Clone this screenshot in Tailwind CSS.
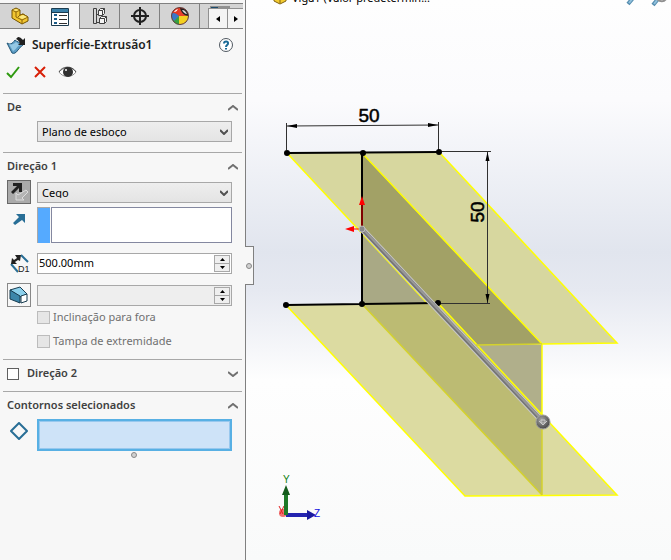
<!DOCTYPE html>
<html lang="pt-BR">
<head>
  <meta charset="UTF-8" />
  <meta name="viewport" content="width=device-width, initial-scale=1.0" />
  <title>Superfície-Extrusão1</title>
  <script src="https://cdn.jsdelivr.net/npm/@tailwindcss/browser@4"></script>
</head>
<body class="flex h-screen overflow-hidden bg-white font-['Noto_Sans',sans-serif] text-[11px] text-black">

  <!-- Property manager -->
  <aside class="relative flex w-[246px] shrink-0 flex-col border-r border-[#808080] bg-[#f7f7f7]">
    <nav class="mt-[3px] mr-[2px] flex h-[26px] border-y border-[#808080] bg-[#d4d4d4]">
      <button aria-label="Árvore" class="flex w-10 shrink-0 items-center justify-center border-r border-[#808080]">
        <svg class="h-[18px] w-[18px]" viewBox="0 0 18 18" stroke="#735300" stroke-linejoin="round">
          <path d="M1 3l4-2 4 2v5l3-1 5 3v4l-6 3L1 11z" fill="#f2c530" />
          <path d="M1 3l4 2v5l6 3 6-3-5-3-3 1-2 2M5 5l4-2M11 13v4" fill="none" stroke="#8c6408" />
          <path d="M5 2l3 1-3 1-3-1zM8 10l4-2 4 2-5 2z" fill="#fce880" stroke="none" />
        </svg>
      </button>
      <button aria-label="Propriedades" class="-mb-px flex w-10 shrink-0 items-center justify-center border-r border-[#808080] bg-[#f7f7f7]">
        <svg class="h-[18px] w-[18px]" viewBox="0 0 18 18" fill="none">
          <path d="M0.500 0.500h17v17h-17z" fill="#fff" stroke="#1c3c50" />
          <path d="M1 1h16v3H1z" fill="#3a80a8" />
          <path d="M1 4.500h16" stroke="#1c3c50" />
          <path d="M3 7h3M3 11h3M3 15h3" stroke="#1c5c88" stroke-width="2" />
          <path d="M8 7.500h8M8 11.500h8M8 15.500h8" stroke="#303030" />
        </svg>
      </button>
      <button aria-label="Configurações" class="flex w-10 shrink-0 items-center justify-center border-r border-[#808080]">
        <svg class="h-[18px] w-[18px]" viewBox="0 0 18 18" fill="#f4f4f4" stroke="#404040">
          <path d="M2.500 1.500h3v15h-3zM5.500 7.500h3M5.500 15.500h3" fill="none" />
          <path d="M7.500 3.500l2-2h4v5l-2 2h-4zM8.500 11.500l2-2h5v5l-2 2h-5z" />
          <path d="M7.500 3.500h4v5M11.500 3.500l2-2M8.500 11.500h5v5M13.500 11.500l2-2" fill="none" />
        </svg>
      </button>
      <button aria-label="Cotas" class="flex w-10 shrink-0 items-center justify-center border-r border-[#808080]">
        <svg class="h-[18px] w-[18px]" viewBox="0 0 18 18" fill="none" stroke="#202020" stroke-width="2">
          <circle cx="9" cy="9" r="6" />
          <path d="M9 0v18M0 9h18" />
        </svg>
      </button>
      <button aria-label="Aparência" class="flex w-10 shrink-0 items-center justify-center border-r border-[#808080]">
        <svg class="h-[18px] w-[18px]" viewBox="0 0 18 18">
          <circle cx="9" cy="9" r="8.500" fill="#e8402c" />
          <path d="M9 0.500C4 0.500 0.500 4 0.500 9L8 10C7 6 7 3 9 0.500z" fill="#e83820" />
          <path d="M0.500 8l7.500 1v8.500C3 17 0.500 13 0.500 8z" fill="#38a040" />
          <path d="M0.500 7C2 5 5 6 8 9l-5 5C1 12 0.500 10 0.500 7z" fill="#3878c8" />
          <path d="M8 9c4 0 7 0 9.500-1 0 6-4 9.500-9.500 9.500z" fill="#f4d020" />
          <path d="M9 1c5 0 8 3 8.500 8C14 9 10 6 9 1z" fill="#202020" />
          <path d="M11 3c3 0 4 2 5 4-2 0-4-2-5-4z" fill="#d8d8d8" />
          <path d="M3 5c1-2 2-2 4-3-1 2-2 3-4 3z" fill="#fff" />
          <circle cx="9" cy="9" r="8.500" fill="none" stroke="#604040" />
        </svg>
      </button>
      <div class="relative flex min-w-0 flex-1 justify-end">
        <svg class="absolute top-[2px] left-[10px] h-2 w-[22px]" viewBox="0 0 22 8"><path d="M0 0h20v3H0z" fill="#909090" /><path d="M1 1h7v7H1z" fill="#1c4c6c" /><path d="M8 2h6v6H8z" fill="#8cbcd8" /></svg>
        <button aria-label="Anterior" class="relative flex h-5 w-5 shrink-0 items-center justify-center self-end border border-b-0 border-[#909090] bg-[#f4f4f4]">
          <svg class="h-[6px] w-[4px]" viewBox="0 0 4 6"><path d="M4 0v6L0 3z" /></svg>
        </button>
        <button aria-label="Próximo" class="relative flex h-5 w-[15px] shrink-0 items-center justify-center self-end border-t border-[#909090] bg-[#f4f4f4]">
          <svg class="h-[6px] w-[4px]" viewBox="0 0 4 6"><path d="M0 0v6l4-3z" /></svg>
        </button>
      </div>
    </nav>

    <header class="flex h-8 items-center pr-3 pl-[6px]">
      <svg class="h-5 w-5" viewBox="0 0 20 20">
        <path d="M1 8c3 2 5 1 8-3 2 2 5 2 8 5-2 1-3 3-5 5-2 3-4 4-6 3-2-3-3-7-5-10z" fill="#5c9cc4" stroke="#245878" />
        <path d="M3 9c3 1 5 0 7-2l4 3c-3 1-4 5-7 6z" fill="#94c8e4" />
        <path d="M12 2c2 0 3 1 5 3l2-2v7h-7l2-2c-1-2-2-3-4-4z" fill="#202020" />
      </svg>
      <h1 class="ml-[6px] text-xs font-semibold text-[#202020]">Superfície-Extrusão1</h1>
      <button aria-label="Ajuda" class="ml-auto">
        <svg class="h-[14px] w-[14px]" viewBox="0 0 14 14" fill="none">
          <circle cx="7" cy="7" r="6.500" fill="#fff" stroke="#505860" />
          <path d="M5 5.500c0-3 4.500-2.500 4 0C9 7 7 7 7 9M7 10v1.500" stroke="#1c6c98" stroke-width="2" />
        </svg>
      </button>
    </header>

    <div class="flex h-[22px] items-center gap-[13px] pl-[6px]">
      <button aria-label="OK">
        <svg class="h-[14px] w-[14px]" viewBox="0 0 14 14" fill="none" stroke="#2f9a10" stroke-width="2"><path d="M1 8l4 4 8-10" /></svg>
      </button>
      <button aria-label="Cancelar">
        <svg class="h-[14px] w-[14px]" viewBox="0 0 14 14" fill="none" stroke="#d82008" stroke-width="2"><path d="M2 2l10 10M12 2L2 12" /></svg>
      </button>
      <button aria-label="Visualizar" class="-ml-[2px]">
        <svg class="h-[14px] w-[19px]" viewBox="0 0 19 14" fill="none">
          <path d="M1 7c4-5 13-6 17 0-4 6-13 6-17 0z" fill="#fff" stroke="#909090" />
          <path d="M1 7C4 1 14 0 18 7" stroke="#505050" />
          <circle cx="10" cy="7" r="5" fill="#303030" />
          <circle cx="8" cy="5" r="1" fill="#fff" />
        </svg>
      </button>
    </div>

    <section class="mx-[3px] mt-[10px] h-[59px] border-t border-[#a8a8a8] px-1">
      <div class="flex h-[27px] items-center justify-between">
        <h2 class="font-semibold text-[#404040]">De</h2>
        <button aria-label="Recolher De">
          <svg class="h-[6px] w-[10px]" viewBox="0 0 10 6" fill="none" stroke="#707070" stroke-width="2"><path d="M0 5l5-4 5 4" /></svg>
        </button>
      </div>
      <div class="relative mr-[6px] ml-[30px]">
        <select aria-label="De" class="h-[21px] w-full appearance-none border border-[#a8a8a8] bg-linear-to-b from-[#eeeeee] to-[#e4e4e4] pl-1 leading-none">
          <option>Plano de esboço</option>
        </select>
        <svg class="pointer-events-none absolute top-2 right-1 h-[6px] w-[8px]" viewBox="0 0 8 6" fill="none" stroke="#505050" stroke-width="2"><path d="M0 1l4 4 4-4" /></svg>
      </div>
    </section>

    <section class="mx-[3px] h-[207px] border-t border-[#a8a8a8] px-1">
      <div class="flex h-[27px] items-center justify-between">
        <h2 class="font-semibold text-[#404040]">Direção 1</h2>
        <button aria-label="Recolher Direção 1">
          <svg class="h-[6px] w-[10px]" viewBox="0 0 10 6" fill="none" stroke="#707070" stroke-width="2"><path d="M0 5l5-4 5 4" /></svg>
        </button>
      </div>

      <div class="mr-[6px] flex gap-[6px]">
        <button aria-label="Inverter direção" class="flex h-6 w-6 shrink-0 items-center justify-center border border-[#686868] bg-[#aaaaaa]">
          <svg class="h-5 w-5" viewBox="0 0 20 20">
            <path d="M17 8l2 2-6 6 2 2H7v-7l2 2z" fill="#b4b4b4" stroke="#dcdcdc" />
            <path d="M2 10l6-6H4V1h9v9h-3V6l-6 6z" fill="#202020" />
          </svg>
        </button>
        <div class="relative mt-[2px] flex-1">
          <select aria-label="Condição final" class="h-[21px] w-full appearance-none border border-[#a8a8a8] bg-linear-to-b from-[#eeeeee] to-[#e4e4e4] pl-1 leading-none">
            <option>Cego</option>
          </select>
          <svg class="pointer-events-none absolute top-2 right-1 h-[6px] w-[8px]" viewBox="0 0 8 6" fill="none" stroke="#505050" stroke-width="2"><path d="M0 1l4 4 4-4" /></svg>
        </div>
      </div>

      <div class="mt-[3px] mr-[6px] flex">
        <div class="w-[30px] shrink-0 pt-[6px] pl-[6px]">
          <svg class="h-3 w-3" viewBox="0 0 12 12" fill="#286e96"><path d="M0 10l6-6-3-3h9v9L9 7l-7 5z" /></svg>
        </div>
        <div class="h-9 w-[13px] shrink-0 border-t border-l border-[#a8a8a8] bg-[#55aaff]"></div>
        <textarea aria-label="Direção de extrusão" class="ml-px h-9 min-w-0 flex-1 resize-none border border-[#8488a0] bg-white"></textarea>
      </div>

      <div class="mt-[10px] mr-[6px] flex items-center">
        <svg class="mr-[7px] ml-[3px] h-5 w-5 shrink-0" viewBox="0 0 20 20" fill="none">
          <path d="M1 10l7 8M11 1l7 7" stroke="#286e96" stroke-width="2" />
          <path d="M1 10l1-6 2 2 3-2-2-3 6 0-1 6-2-1-3 2 2 2z" fill="#202020" />
          <text x="8" y="18" class="font-['Liberation_Sans',sans-serif] text-[9px]" fill="#202020">D1</text>
        </svg>
        <div class="flex h-[21px] min-w-0 flex-1 items-center border border-[#a8a8a8] bg-white pr-px">
          <input aria-label="Profundidade" value="500.00mm" class="min-w-0 flex-1 pl-px outline-none" />
          <div class="flex w-4 flex-col">
            <button aria-label="Aumentar" class="flex h-[9px] items-center justify-center border border-[#a8a8a8] bg-[#efefef]"><svg class="h-[3px] w-[5px]" viewBox="0 0 5 3"><path d="M0 3h5L2.500 0z" /></svg></button>
            <button aria-label="Diminuir" class="flex h-[8px] items-center justify-center border border-t-0 border-[#a8a8a8] bg-[#efefef]"><svg class="h-[3px] w-[5px]" viewBox="0 0 5 3"><path d="M0 0h5L2.500 3z" /></svg></button>
          </div>
        </div>
      </div>

      <div class="mt-[9px] mr-[6px] flex items-center gap-[6px]">
        <button aria-label="Inclinação" class="flex h-6 w-6 shrink-0 items-center justify-center border border-[#888888] bg-[#f7f7f7]">
          <svg class="h-5 w-5" viewBox="0 0 20 20" stroke="#183c50" stroke-linejoin="round">
            <path d="M1 5l10-3 7 7-7 3z" fill="#8cd0ec" />
            <path d="M1 5l10 6v7L1 14z" fill="#3c86aa" />
            <path d="M12 11l6-2v7l-6 2z" fill="#fff" />
          </svg>
        </button>
        <div class="flex h-[21px] min-w-0 flex-1 items-center border border-[#a8a8a8] bg-[#eeeeee] pr-px">
          <input aria-label="Ângulo" disabled class="min-w-0 flex-1" />
          <div class="flex w-4 flex-col">
            <button aria-label="Aumentar ângulo" class="flex h-[9px] items-center justify-center border border-[#a8a8a8] bg-[#efefef]"><svg class="h-[3px] w-[5px]" viewBox="0 0 5 3"><path d="M0 3h5L2.500 0z" /></svg></button>
            <button aria-label="Diminuir ângulo" class="flex h-[8px] items-center justify-center border border-t-0 border-[#a8a8a8] bg-[#efefef]"><svg class="h-[3px] w-[5px]" viewBox="0 0 5 3"><path d="M0 0h5L2.500 3z" /></svg></button>
          </div>
        </div>
      </div>

      <label class="ml-[30px] flex h-5 items-center gap-[3px] text-[#707070]">
        <input type="checkbox" disabled class="h-[13px] w-[13px] appearance-none border border-[#bcbcbc] bg-[#e6e6e6]" />
        Inclinação para fora
      </label>
      <label class="mt-1 ml-[30px] flex h-5 items-center gap-[3px] text-[#707070]">
        <input type="checkbox" disabled class="h-[13px] w-[13px] appearance-none border border-[#bcbcbc] bg-[#e6e6e6]" />
        Tampa de extremidade
      </label>
    </section>

    <section class="mx-[3px] flex h-8 justify-between border-t border-[#a8a8a8] px-1">
      <label class="flex h-[27px] items-center gap-2 font-semibold text-[#404040]">
        <input type="checkbox" class="h-3 w-3 appearance-none border border-[#606060] bg-white" />
        Direção 2
      </label>
      <button aria-label="Expandir Direção 2" class="h-[27px]">
        <svg class="h-[6px] w-[10px]" viewBox="0 0 10 6" fill="none" stroke="#707070" stroke-width="2"><path d="M0 1l5 4 5-4" /></svg>
      </button>
    </section>

    <section class="mx-[3px] border-t border-[#a8a8a8] px-1">
      <div class="flex h-[27px] items-center justify-between">
        <h2 class="font-semibold text-[#404040]">Contornos selecionados</h2>
        <button aria-label="Recolher Contornos selecionados">
          <svg class="h-[6px] w-[10px]" viewBox="0 0 10 6" fill="none" stroke="#707070" stroke-width="2"><path d="M0 5l5-4 5 4" /></svg>
        </button>
      </div>
      <div class="mr-[6px] flex">
        <svg class="mt-[3px] mr-[9px] ml-[3px] h-[18px] w-[18px] shrink-0" viewBox="0 0 18 18" fill="none" stroke="#286e96" stroke-width="2" stroke-linejoin="round"><path d="M9 1l8 8-8 8-8-8z" /></svg>
        <textarea aria-label="Contornos selecionados" class="h-8 min-w-0 flex-1 resize-none border-2 border-[#58b0e4] bg-[#cee3f8] inset-ring inset-ring-[#98c8ee]"></textarea>
      </div>
      <div class="flex justify-center pt-px pl-[22px]">
        <div class="h-[6px] w-[6px] rounded-full border border-[#888888] bg-[#d0d0d0]"></div>
      </div>
    </section>

    <!-- Splitter grip -->
    <div class="absolute top-[246px] -right-[9px] z-10 flex h-[39px] w-[9px] items-center justify-center border border-l-0 border-[#808080] bg-[#f7f7f7]">
      <div class="h-[6px] w-[6px] rounded-full border border-[#888888] bg-[#d0d0d0]"></div>
    </div>
  </aside>

  <!-- Graphics area -->
  <main class="min-w-0 flex-1">
    <svg class="h-full w-full" viewBox="246 0 425 560" preserveAspectRatio="xMinYMin slice">
      <defs>
        <linearGradient id="sky" x1="0" y1="0" x2="0" y2="1">
          <stop offset="0" stop-color="#fefefe" />
          <stop offset="0.180" stop-color="#fbfbfd" />
          <stop offset="0.450" stop-color="#e1e5ee" />
          <stop offset="0.520" stop-color="#e6e9f1" />
          <stop offset="0.680" stop-color="#fefefe" />
          <stop offset="1" stop-color="#f9fafa" />
        </linearGradient>
        <radialGradient id="ball" cx="0.400" cy="0.350" r="0.700">
          <stop offset="0" stop-color="#a8a8a8" />
          <stop offset="1" stop-color="#404040" />
        </radialGradient>
      </defs>
      <rect x="246" width="425" height="560" fill="url(#sky)" />

      <!-- Feature tree flyout and view tools -->
      <path d="M274-4v5l6 3 6-3v-5z" fill="#f4cc30" stroke="#806010" />
      <path d="M280-2v5" stroke="#806010" />
      <text x="292" y="2" class="font-['Noto_Sans',sans-serif] text-[11px]">Viga1 (Valor predetermin...</text>
      <path d="M628 4l5-6M653 5l5-6" stroke="#548cae" stroke-width="4" />
      <path d="M629 3l4-5M654 4l4-5" stroke="#90c0dc" stroke-width="2" />
      <path d="M657-1c3 3 7 3 9 0" fill="none" stroke="#909090" stroke-width="2" />

      <!-- Extruded surfaces -->
      <path d="M287 153L439 152 617 343 542 344 476 345 438 304 427 303z" fill="#d7d79f" />
      <path d="M362 231v73l65-1z" fill="#a9a985" />
      <path d="M362 153l180 191-66 1-38-42h-11l-65-72z" fill="#a2a166" />
      <path d="M476 345h66v69z" fill="#b0af8b" />
      <path d="M286 305l152-2 179 192-152 1z" fill="#dcdba1" />
      <path d="M362 304l76-1 104 112v80z" fill="#bcbb73" />
      <g fill="none" stroke="#ffff00" stroke-width="1.500">
        <path d="M287 153l140 150M362 153l180 191v76M439 152l178 191-75 1M286 305l179 191 152-1-179-192" />
        <path d="M362 304l180 191M476 345l66-1M542 420v75" stroke="#d4d22c" />
      </g>

      <!-- Sketch and dimensions -->
      <path d="M287 153l152-1M286 305l152-2M362 153v151" fill="none" stroke="#000" stroke-width="2" />
      <path d="M286.500 150v-27M438.500 150v-28M287 126l151-1M440 151.500h51M487.500 152v151M439 303.500h51" fill="none" stroke="#303030" />
      <path d="M287 126l10-2v4zM438 125l-10-2v4zM487.500 152l-2 9h4zM487.500 303l-2-9h4z" />
      <circle cx="287" cy="153" r="3" /><circle cx="363" cy="153" r="3" /><circle cx="439" cy="152" r="3" />
      <circle cx="286" cy="305" r="3" /><circle cx="362" cy="304" r="3" /><circle cx="438" cy="303" r="3" />
      <g class="font-['Liberation_Sans',sans-serif] text-[19px]" stroke="#000" stroke-width="0.500" text-anchor="middle">
        <text x="369" y="122">50</text>
        <text transform="translate(484 212) rotate(-90)">50</text>
      </g>

      <!-- Drag handle -->
      <path d="M362 229v-24M362 229h-10" stroke="#f00" />
      <path d="M362 196l-3 9h6zM345 229l9-3v6z" fill="#f00" />
      <path d="M362 229l181 193" stroke="#c8c8c8" stroke-width="6" />
      <path d="M362 229l181 193" stroke="#747474" stroke-width="4" />
      <path d="M362 228l181 193" stroke="#989898" stroke-width="2" />
      <circle cx="362" cy="229" r="3" fill="#888" stroke="#bbb" />
      <circle cx="543" cy="422" r="7" fill="url(#ball)" stroke="#a0a0a0" />
      <path d="M539 421l4 4 4-4M541 420h4v3h-4z" fill="none" stroke="#c8c8c8" />

      <!-- Origin triad -->
      <circle cx="283" cy="513" r="4" fill="#f07070" />
      <path d="M279 506l4 8M284 506l-4 8" stroke="#e02020" />
      <path d="M286 515h23" stroke="#2424b0" stroke-width="4" />
      <path d="M307 510l9 5-9 5z" fill="#1a1aa0" />
      <path d="M286 515v-23" stroke="#1e7a28" stroke-width="4" />
      <path d="M286 485l-4 10h8z" fill="#145c1c" />
      <g class="font-['Liberation_Sans',sans-serif] text-[10px]">
        <text x="283" y="483" fill="#108010">Y</text>
        <text x="314" y="517" fill="#1010e0">Z</text>
      </g>
    </svg>
  </main>

</body>
</html>
